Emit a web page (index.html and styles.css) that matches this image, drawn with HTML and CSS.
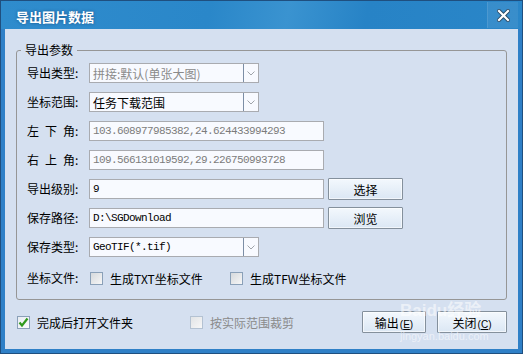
FILE: index.html
```html
<!DOCTYPE html>
<html>

<head>
    <title>导出图片数据</title>
    <link rel="stylesheet" href="styles.css">
</head>

<body>

    <div class="window">
        <div class="titlebar">
            <span class="title">导出图片数据</span>
            <div class="close">
                <svg width="13" height="13" viewBox="0 0 13 13">
                    <path d="M2 2 L11 11 M11 2 L2 11" stroke="#2a4a66" stroke-width="4" stroke-linecap="square"/>
                    <path d="M2 2 L11 11 M11 2 L2 11" stroke="#ffffff" stroke-width="2.2" stroke-linecap="square"/>
                </svg>
            </div>
        </div>

        <div class="client">
            <fieldset class="params">
                <legend>导出参数</legend>
                <div class="form">
                    <label class="lbl"><span class="lbl-text">导出类型</span>:</label>
                    <div class="combo disabled">
                        <span class="combo-text">拼接:默认(单张大图)</span>
                        <span class="combo-arrow"><svg width="8" height="5" viewBox="0 0 8 5"><path d="M0.5 0.5 L4 4 L7.5 0.5" fill="none" stroke="#a0a4aa" stroke-width="1"/></svg></span>
                    </div>

                    <label class="lbl"><span class="lbl-text">坐标范围</span>:</label>
                    <div class="combo">
                        <span class="combo-text">任务下载范围</span>
                        <span class="combo-arrow"><svg width="8" height="5" viewBox="0 0 8 5"><path d="M0.5 0.5 L4 4 L7.5 0.5" fill="none" stroke="#a0a4aa" stroke-width="1"/></svg></span>
                    </div>

                    <label class="lbl"><span class="lbl-text">左下角</span>:</label>
                    <div class="field mono readonly">103.608977985382,24.624433994293</div>

                    <label class="lbl"><span class="lbl-text">右上角</span>:</label>
                    <div class="field mono readonly">109.566131019592,29.226750993728</div>

                    <label class="lbl"><span class="lbl-text">导出级别</span>:</label>
                    <div class="ctl-row">
                        <div class="field mono">9</div>
                        <button class="btn">选择</button>
                    </div>

                    <label class="lbl"><span class="lbl-text">保存路径</span>:</label>
                    <div class="ctl-row">
                        <div class="field mono">D:\SGDownload</div>
                        <button class="btn">浏览</button>
                    </div>

                    <label class="lbl"><span class="lbl-text">保存类型</span>:</label>
                    <div class="combo">
                        <span class="combo-text mono">GeoTIF(*.tif)</span>
                        <span class="combo-arrow"><svg width="8" height="5" viewBox="0 0 8 5"><path d="M0.5 0.5 L4 4 L7.5 0.5" fill="none" stroke="#a0a4aa" stroke-width="1"/></svg></span>
                    </div>

                    <label class="lbl"><span class="lbl-text">坐标文件</span>:</label>
                    <div class="checks">
                        <div class="check check-txt"><span class="box"></span>生成TXT坐标文件</div>
                        <div class="check"><span class="box"></span>生成TFW坐标文件</div>
                    </div>
                </div>
            </fieldset>

            <div class="footer">
                <div class="check check-open">
                    <span class="box">
                        <svg width="11" height="11" viewBox="0 0 11 11"><path d="M1.5 5.5 L4 8.5 L9.5 1.5" fill="none" stroke="#2f9a1c" stroke-width="2.2"/></svg>
                    </span>
                    完成后打开文件夹
                </div>
                <div class="check dis"><span class="box"></span>按实际范围裁剪</div>
                <div class="footer-btns">
                    <button class="btn btn-ok">输出<span class="mn">(<u>E</u>)</span></button>
                    <button class="btn btn-close">关闭<span class="mn">(<u>C</u>)</span></button>
                </div>
            </div>
        </div>

        <!-- watermark from the source screenshot -->
        <div class="watermark">
            <span class="wm-logo">Baidu经验</span>
            <span class="wm-url">jingyan.baidu.com</span>
        </div>
    </div>

</body>

</html>
```

FILE: styles.css
```css
* {
    box-sizing: border-box;
}

body {
    margin: 0;
    font-family: "Noto Sans CJK SC", "Liberation Sans", sans-serif;
    font-size: 12px;
    color: #000;
}

.window {
    position: relative;
    width: 523px;
    height: 354px;
    display: flex;
    flex-direction: column;
    padding: 0 5px 5px;
    background: #2f80c7;
    box-shadow: inset 0 0 0 1px #1f4f7f;
}

.titlebar {
    height: 29px;
    margin: 0 -5px;
    display: flex;
    padding-left: 15px;
    border: 1px solid #1f4f7f;
    border-bottom: none;
    background: linear-gradient(100deg, #2f8ccd 0%, #2a87c9 40%, #3a93d0 55%, #2783c6 70%, #2a86c8 100%);
}

.title {
    align-self: center;
    margin-top: 2px;
    color: #fff;
    font-weight: bold;
    font-size: 13px;
    text-shadow: 0 0 3px rgba(0, 30, 70, 0.5);
}

.close {
    margin: 1px 4px 0 auto;
    width: 31px;
    height: 26px;
    display: flex;
    align-items: center;
    justify-content: center;
    background: rgba(255, 255, 255, 0.07);
    border-left: 1px solid rgba(255, 255, 255, 0.1);
}

.client {
    flex: 1;
    background: #d5e0f0;
    display: flex;
    flex-direction: column;
}

.params {
    margin: 14px 11px 0;
    padding: 6px 10px 9px;
    border: 1px solid #969696;
    border-radius: 3px;
    min-width: 0;
}

.params legend {
    margin-left: -6px;
    padding: 0 4px;
    line-height: 14px;
    font-size: 12px;
}

.form {
    display: grid;
    grid-template-columns: 62px 1fr;
    grid-template-rows: repeat(7, 20px) 24px;
    row-gap: 9px;
    align-items: center;
}

.lbl {
    display: flex;
    align-items: center;
    line-height: 14px;
}

.lbl-text {
    display: inline-block;
    width: 48px;
    text-align-last: justify;
}

.ctl-row {
    display: flex;
    align-items: center;
    gap: 4px;
}

.field {
    width: 235px;
    height: 20px;
    padding: 0 3px;
    display: flex;
    align-items: center;
    border: 1px solid #a9abb0;
    background: #f8faff;
}

.mono {
    font-family: "Liberation Mono", monospace;
    font-size: 11px;
    letter-spacing: -0.6px;
}

.readonly {
    color: #7c7c7c;
}

.combo {
    width: 170px;
    height: 20px;
    display: flex;
    border: 1px solid #a9abb0;
    background: #f8faff;
}

.combo-text {
    flex: 1;
    padding-left: 3px;
    display: flex;
    align-items: center;
}

.combo-arrow {
    width: 15px;
    display: flex;
    align-items: center;
    justify-content: center;
    border-left: 1px solid #7c8ea6;
}

.disabled .combo-text {
    color: #8a8a8a;
}

.btn {
    width: 75px;
    height: 22px;
    padding: 0;
    font: inherit;
    color: #000;
    border: 1px solid #84909c;
    border-radius: 1px;
    background: linear-gradient(#f3f8fd, #dbe7f4);
    box-shadow: inset 0 0 0 1px rgba(255, 255, 255, 0.6);
}

.checks {
    display: flex;
    align-items: center;
    padding-left: 1px;
}

.check {
    display: flex;
    align-items: center;
    gap: 7px;
}

.check-txt {
    width: 140px;
}

.box {
    width: 13px;
    height: 13px;
    display: flex;
    align-items: center;
    justify-content: center;
    border: 1px solid #8aa0b8;
    background: linear-gradient(135deg, #d6d9dc, #f7f7f7);
}

.footer {
    margin-top: 11px;
    height: 22px;
    padding: 0 11px 0 12px;
    display: flex;
    align-items: center;
}

.check-open {
    width: 173px;
}

.check-open .box {
    background: linear-gradient(135deg, #e8edf2, #fbfbfb);
}

.dis {
    color: #8a8a8a;
}

.dis .box {
    border-color: #b4c2d2;
    background: linear-gradient(135deg, #e2e4e6, #f7f7f7);
}

.footer-btns {
    margin-left: auto;
    display: flex;
    gap: 11px;
}

.btn-ok {
    width: 64px;
}

.btn-close {
    width: 70px;
}

.mn {
    font-family: "Liberation Sans", sans-serif;
    font-size: 10px;
    margin-left: 1px;
}

.watermark {
    position: absolute;
    left: 400px;
    top: 300px;
    display: flex;
    flex-direction: column;
    color: rgba(255, 255, 255, 0.55);
    pointer-events: none;
}

.wm-logo {
    font-family: "Liberation Sans", "Noto Sans CJK SC", sans-serif;
    font-size: 17px;
    font-weight: bold;
    line-height: 22px;
}

.wm-url {
    font-family: "Liberation Sans", sans-serif;
    font-size: 11px;
    line-height: 12px;
    margin-top: 8px;
}
```
